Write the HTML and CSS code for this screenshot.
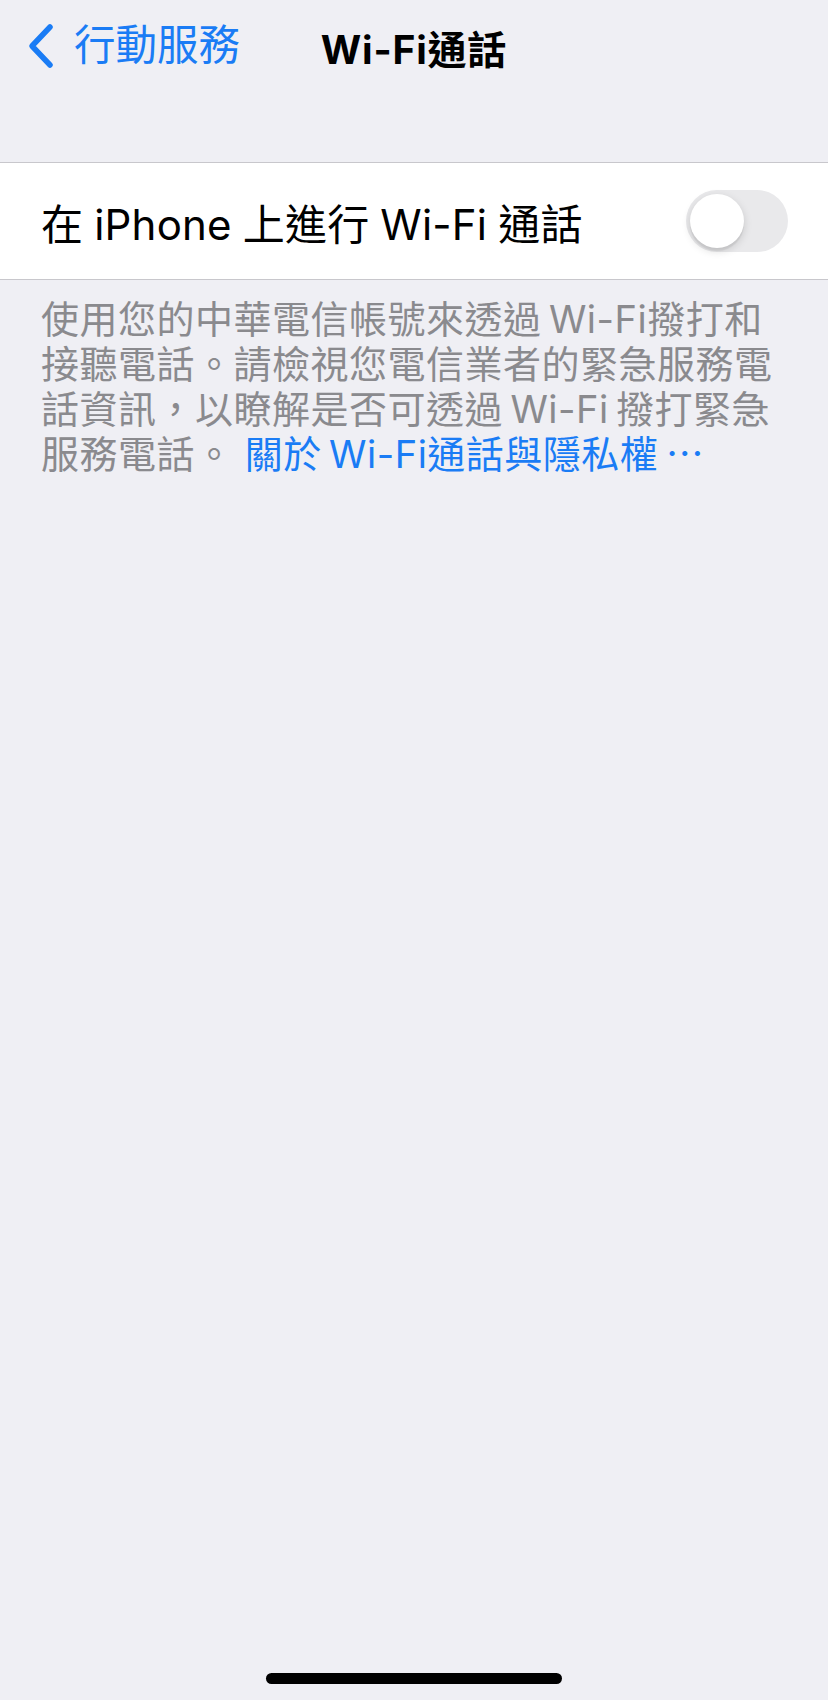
FILE: index.html
```html
<!DOCTYPE html>
<html lang="zh-Hant">
<head>
  <meta charset="UTF-8" />
  <meta name="viewport" content="width=device-width, initial-scale=1" />
  <title>Wi-Fi通話</title>
  <link rel="stylesheet" href="styles.css">
</head>
<body>

<div class="screen">
  <nav class="nav-bar">
    <a class="back-btn" href="#">
      <svg class="chevron" width="28" height="46" viewBox="0 0 28 46">
        <path d="M23 4 L5 23 L23 42" fill="none" stroke="#1a7cf5" stroke-width="5.5" stroke-linecap="round" stroke-linejoin="round"/>
      </svg>
      <span>行動服務</span>
    </a>
    <div class="nav-title">Wi-Fi通話</div>
    <div></div>
  </nav>

  <div class="group">
    <div class="row">
      <span class="row-label">在 iPhone 上進行 Wi-Fi 通話</span>
      <div class="switch"><div class="knob"></div></div>
    </div>
  </div>

  <p class="footnote">
    使用您的中華電信帳號來透過&#8201;Wi-Fi撥打和接聽電話。請檢視您電信業者的緊急服務電話資訊，以瞭解是否可透過&#8201;Wi-Fi&#8201;撥打緊急服務電話。
    <a class="link" href="#">關於&#8201;Wi-Fi通話與隱私權&#8201;<span class="dots">⋯</span></a>
  </p>

  <div class="home-indicator"></div>
</div>

</body>
</html>
```

FILE: styles.css
```css
/* Basic Reset */
* {
  margin: 0; padding: 0; box-sizing: border-box;
}
body {
  background: #efeff4;
  font-family: Inter, "Noto Sans CJK TC", sans-serif;
  color: #000;
}
.screen {
  width: 828px;
  height: 1700px;
  display: flex;
  flex-direction: column;
}
.nav-bar {
  height: 92px;
  display: grid;
  grid-template-columns: 1fr auto 1fr;
  align-items: center;
  padding: 0 27px;
}
.back-btn {
  display: flex;
  align-items: center;
  gap: 19px;
  color: #1a7cf5;
  text-decoration: none;
  font-size: 41.5px;
  line-height: 1;
}
.chevron {
  flex-shrink: 0;
}
.nav-title {
  font-size: 39px;
  font-weight: 700;
  letter-spacing: 0.8px;
  margin-top: 2px;
}
.group {
  margin-top: 70px;
  background: #fff;
  border-top: 1px solid #c8c7cc;
  border-bottom: 1px solid #c8c7cc;
}
.row {
  height: 116px;
  display: flex;
  align-items: center;
  justify-content: space-between;
  padding: 0 40px 0 41px;
}
.row-label {
  font-size: 42px;
  letter-spacing: 0.2px;
  word-spacing: -1px;
}
.switch {
  width: 102px;
  height: 62px;
  border-radius: 31px;
  background: #e9e9eb;
  padding: 4px;
}
.knob {
  width: 54px;
  height: 54px;
  border-radius: 50%;
  background: #fff;
  box-shadow: 0 3px 8px rgba(0,0,0,0.15), 0 3px 1px rgba(0,0,0,0.06);
}
.footnote {
  padding: 17px 40px 0 41px;
  font-size: 38px;
  line-height: 45px;
  color: #8a8a8e;
  letter-spacing: 0.5px;
}
.link {
  color: #1a7cf5;
  text-decoration: none;
}
.dots {
  font-family: "Noto Sans CJK TC", sans-serif;
  line-height: 1;
}
.home-indicator {
  margin: auto auto 16px;
  width: 296px;
  height: 11px;
  border-radius: 6px;
  background: #000;
}
```
